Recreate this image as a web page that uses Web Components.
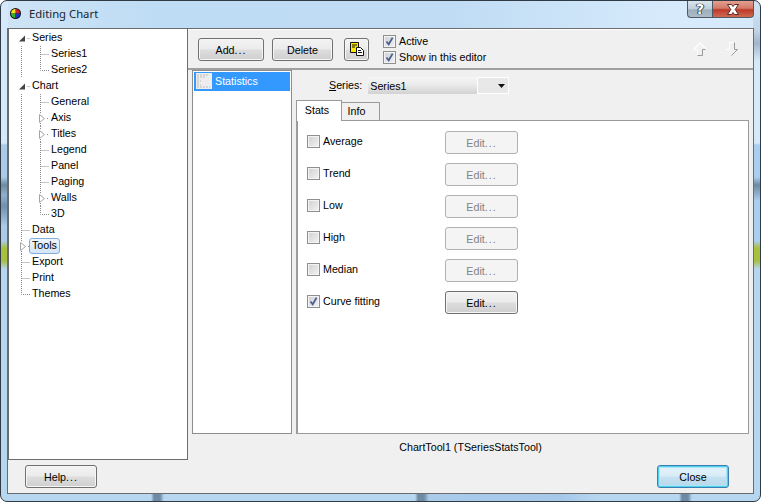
<!DOCTYPE html>
<html><head><meta charset="utf-8"><title>Editing Chart</title>
<style>
html,body{margin:0;padding:0;width:761px;height:502px;overflow:hidden;background:#fff}
body{font:10.7px "Liberation Sans",Arial,sans-serif;color:#000}
.d{letter-spacing:1px}
</style></head><body>
<x-window>
  <x-titlebar slot="title" text="Editing Chart"></x-titlebar>
  <x-tree slot="tree">
    <x-node g="o" text="Series"></x-node>
    <x-node g="|T" text="Series1"></x-node>
    <x-node g="|L" text="Series2"></x-node>
    <x-node g="o" text="Chart"></x-node>
    <x-node g="|T" text="General"></x-node>
    <x-node g="|c" text="Axis"></x-node>
    <x-node g="|c" text="Titles"></x-node>
    <x-node g="|T" text="Legend"></x-node>
    <x-node g="|T" text="Panel"></x-node>
    <x-node g="|T" text="Paging"></x-node>
    <x-node g="|c" text="Walls"></x-node>
    <x-node g="|L" text="3D"></x-node>
    <x-node g="T" text="Data"></x-node>
    <x-node g="c" text="Tools" selected></x-node>
    <x-node g="T" text="Export"></x-node>
    <x-node g="T" text="Print"></x-node>
    <x-node g="L" text="Themes"></x-node>
  </x-tree>
  <x-toolbar slot="toolbar"></x-toolbar>
  <x-list slot="list" text="Statistics"></x-list>
  <x-stats slot="page"></x-stats>
  <span slot="status">ChartTool1 (TSeriesStatsTool)</span>
  <x-btn slot="help" w="72" h="23">Help<span class="d">...</span></x-btn>
  <x-btn slot="close" w="72" h="23" kind="default">Close</x-btn>
</x-window>
<script>
const def=(name,html,extra={})=>{
  const t=document.createElement('template');t.innerHTML=html;
  class C extends HTMLElement{
    constructor(){super();this.attachShadow({mode:'open'}).appendChild(t.content.cloneNode(true));}
    connectedCallback(){extra.init&&extra.init.call(this);}
  }
  customElements.define(name,C);
};
def('x-btn',`<style>
:host{display:inline-flex;box-sizing:border-box;align-items:center;justify-content:center;border:1px solid #707070;border-radius:3px;
background:linear-gradient(#f3f3f3 0,#ebebeb 48%,#dddddd 52%,#cfcfcf 100%);box-shadow:inset 0 0 0 1px #f6f6f6;color:#000;padding-top:1px;white-space:nowrap}
:host([kind=disabled]){border-color:#adb2b5;background:#f4f4f4;color:#838383;box-shadow:none}
:host([kind=default]){border-color:#3c7fb1;background:linear-gradient(#e4f3fb 0,#d8ecf7 48%,#c6e2f2 52%,#b6d6e8 100%);box-shadow:inset 0 0 0 1px #4fd0f0,inset 0 0 0 2px #a8e6f8}
</style><slot></slot>`,{init(){const w=this.getAttribute('w'),h=this.getAttribute('h');if(w)this.style.width=w+'px';if(h)this.style.height=h+'px';}});

def('x-check',`<style>
:host{display:inline-flex;align-items:center;gap:3px;white-space:nowrap}
.b{width:13px;height:13px;box-sizing:border-box;border:1px solid #8e8f8f;background:linear-gradient(135deg,#d0d0d0,#f2f2f2);box-shadow:inset 0 0 0 1px #f4f4f4;display:block;flex:none}
svg{display:block;visibility:hidden}
:host([checked]) svg{visibility:visible}
</style><span class="b"><svg width="11" height="11" viewBox="0 0 11 11"><path d="M2.5 5.5 L4.7 8.3 L8.6 1.6" fill="none" stroke="#4a5f97" stroke-width="1.8"/></svg></span><slot></slot>`);

def('x-titlebar',`<style>
:host{display:flex;align-items:center;height:27px;box-sizing:border-box;padding:0 0 1px 3px;gap:8px;color:#1a2430;position:relative;font:11.3px "Noto Sans",sans-serif}
svg.i{display:block;flex:none}
.caps{position:absolute;top:0;right:0;display:flex;height:17px}
.h,.x{box-sizing:border-box;border:1px solid #4d5a66;border-top:0;display:flex;align-items:center;justify-content:center;height:17px}
.h{width:25px;border-right:0;border-radius:0 0 0 4px;background:linear-gradient(#dbe5ee 0,#c0ced9 50%,#9cadbb 55%,#aebcc8 100%);color:#fff;font:bold 14px "DejaVu Sans",sans-serif;text-shadow:0 0 1px #222,0 0 1px #222,1px 0 0 #555,-1px 0 0 #555}
.x{width:42px;border-radius:0 0 4px 0;background:linear-gradient(#e3a08f 0,#d27a69 45%,#bc3a2a 55%,#cf6a52 100%)}
</style>
<svg class="i" width="11" height="11" viewBox="0 0 11 11"><circle cx="5.5" cy="5.5" r="5.5" fill="#111"/><path d="M5.5 1A4.5 4.5 0 0 1 10 5.5L5.5 5.5Z" fill="#d8202a"/><path d="M1 5.5A4.5 4.5 0 0 1 5.5 1L5.5 5.5Z" fill="#f2e21c"/><path d="M1 5.5A4.5 4.5 0 0 0 5.5 10L5.5 5.5Z" fill="#2db52d"/><path d="M10 5.5A4.5 4.5 0 0 1 5.5 10L5.5 5.5Z" fill="#2030c8"/></svg>
<span id="t"></span>
<div class="caps"><div class="h">?</div><div class="x"><svg width="16" height="11" viewBox="0 0 16 11"><path d="M2.5 .5H6.5L8 2.5L9.5 .5H13.5L10.2 5.5L13.5 10.5H9.5L8 8.5L6.5 10.5H2.5L5.8 5.5Z" fill="#fff" stroke="#5c2a22" stroke-width="1"/></svg></div></div>`,
{init(){this.shadowRoot.getElementById('t').textContent=this.getAttribute('text');}});

def('x-tree',`<style>
:host{display:block;box-sizing:border-box;width:180px;height:100%;background:#fff;border:1px solid #6c6c6c;padding:1px 0 0 0}
</style><slot></slot>`);

def('x-node',`<style>
:host{display:flex;height:16px;align-items:center;white-space:nowrap}
svg{display:block;flex:none}
.t{padding:0 2px;margin-left:-1px;height:16px;box-sizing:border-box;line-height:13px;border:1px solid transparent}
:host([selected]) .t{border:1px solid #84acdd;border-radius:3px;background:linear-gradient(#eef5fc,#d3e5f8);}
</style><svg id="s" height="16"></svg><span class="t" id="t"></span>`,{init(){
  const g=this.getAttribute('g');const col=19,base=12;let x=base,p='';
  const dot='stroke="#8a8a8a" stroke-width="1" stroke-dasharray="1 1" fill="none"';
  for(let i=0;i<g.length;i++){
    const c=g[i],vx=x+.5;
    if(c=='|')p+=`<path d="M${vx} 0V16" ${dot}/>`;
    if(c=='T')p+=`<path d="M${vx} 0V16M${vx} 8.5H${x+9}" ${dot}/>`;
    if(c=='L')p+=`<path d="M${vx} 0V8.5H${x+9}" ${dot}/>`;
    if(c=='o')p+=`<path d="M${vx+6} 8.5H${x+9}" ${dot}/><path d="M${x-2} 11.5L${x+4} 11.5L${x+4} 5.5Z" fill="#444"/>`;
    if(c=='c')p+=`<path d="M${vx} 0V4M${vx} 13V16M${x+7} 8.5H${x+9}" ${dot}/><path d="M${x-.5} 4.5L${x+4.5} 8.5L${x-.5} 12.5Z" fill="#fff" stroke="#a6a6a6"/>`;
    x+=col;
  }
  const w=x-col+9;const s=this.shadowRoot.getElementById('s');
  s.setAttribute('width',w);s.setAttribute('viewBox',`0 0 ${w} 16`);s.innerHTML=p;
  this.shadowRoot.getElementById('t').textContent=this.getAttribute('text');
}});

def('x-toolbar',`<style>
:host{display:flex;align-items:flex-start;box-sizing:border-box;height:42px;background:#f0f0f0;border-top:1px solid #6c6c6c;box-shadow:inset 0 1px #fff;border-bottom:2px solid #a0a0a0;padding:9px 14px 0 10px;gap:8px}
.icon{margin-left:3px;padding-top:0}
.checks{display:flex;flex-direction:column;gap:3px;margin:-3px 0 0 6px}
.sp{flex:1}
.arrows{display:flex;gap:18px;margin-top:4px}
svg{display:block}
x-check{height:13px}
.d{letter-spacing:1px}
</style>
<x-btn w="66" h="23">Add<span class="d">...</span></x-btn><x-btn w="61" h="23">Delete</x-btn>
<x-btn class="icon" w="25" h="23"><svg width="16" height="16" viewBox="0 0 16 16"><path d="M1.5 1.5H9.5V11.5H1.5Z" fill="#ffe800" stroke="#111"/><path d="M3 4H8M3 6H6" stroke="#111"/><path d="M7.5 6.5H11.5L14.5 9.5V14.5H7.5Z" fill="#fff" stroke="#111"/><path d="M9 9.5H12M9 11.5H13" stroke="#111"/></svg></x-btn>
<div class="checks"><x-check checked>Active</x-check><x-check checked>Show in this editor</x-check></div>
<div class="sp"></div>
<div class="arrows">
<svg width="14" height="14" viewBox="0 0 14 14"><path d="M1 7L7 1L12.5 6.5" stroke="#fff" fill="none" stroke-width="1.2"/><path d="M1 7.5H4.5V13.5" fill="none" stroke="#fff"/><path d="M4.5 13.5H9.5V7.5H12.5" fill="none" stroke="#9a9a9a"/></svg>
<svg width="14" height="14" viewBox="0 0 14 14"><path d="M1 7.5H4.5V.5H9" fill="none" stroke="#fff"/><path d="M9.5 .5V7.5H12.5L6.5 13.5" fill="none" stroke="#9a9a9a"/></svg>
</div>`);

def('x-list',`<style>
:host{display:block;box-sizing:border-box;width:100px;height:100%;background:#fff;border:1px solid #8d8d8d;padding:1px}
.r{display:flex;align-items:center;height:19px;background:#3399ff;color:#fff;gap:3px;padding-left:2px}
svg{display:block}
</style><div class="r"><svg width="16" height="16" viewBox="0 0 16 16"><rect width="16" height="16" fill="#ededed"/><path d="M1 2H13M1 4H10M1 6H4M1 8H5M1 10H4M1 12H5M1 14H14" stroke="#bdbdbd" stroke-dasharray="2 1"/></svg><span id="t"></span></div>`,
{init(){this.shadowRoot.getElementById('t').textContent=this.getAttribute('text');}});

def('x-combo',`<style>
:host{display:inline-flex;height:17px;width:141px;box-sizing:border-box;background:linear-gradient(#f5f5f5 0,#ececec 40%,#d2d2d2 100%);align-items:center}
.v{flex:1;padding-left:2px;padding-top:2px}
.b{width:32px;height:17px;box-sizing:border-box;border:1px solid #fff;background:#e8e8e8;display:flex;align-items:center;justify-content:flex-end;padding:2px 2px 0 0}
svg{display:block}
</style><span class="v"><slot></slot></span><span class="b"><svg width="9" height="5" viewBox="0 0 9 5"><path d="M1 0H8L4.5 4Z" fill="#111"/></svg></span>`);

def('x-tabs',`<style>
:host{display:flex;flex-direction:column;flex:1;min-height:0}
.head{display:flex;align-items:flex-end;height:20px;position:relative;z-index:1}
.tab{box-sizing:border-box;display:flex;align-items:center;justify-content:center}
.a{width:46px;background:#fff;border:1px solid #9b9b9b;border-bottom:0;padding:0 4px 2px 0;margin-bottom:-1px;height:21px}
.i{width:38px;height:18px;background:#f0f0f0;border:1px solid #9b9b9b;border-left:0;border-bottom:0;padding-right:8px}
.body{flex:1;background:#fff;border:1px solid #9b9b9b;border-left-width:2px;min-height:0;box-sizing:border-box;padding:10px 0 0 9px}
</style><div class="head"><div class="tab a">Stats</div><div class="tab i">Info</div></div><div class="body"><slot></slot></div>`);

def('x-stat',`<style>
:host{display:grid;grid-template-columns:138px 73px;height:22px;margin-bottom:10px;align-items:start}
x-check{margin-top:4px;height:13px}
.d{letter-spacing:1px}
</style><x-check id="c"></x-check><x-btn id="b" w="73" h="23">Edit<span class="d">...</span></x-btn>`,{init(){
  const c=this.shadowRoot.getElementById('c'),b=this.shadowRoot.getElementById('b');
  c.textContent=this.getAttribute('text');
  if(this.hasAttribute('on'))c.setAttribute('checked','');else b.setAttribute('kind','disabled');
}});

def('x-stats',`<style>
:host{display:flex;flex-direction:column;flex:1;min-width:0;height:100%}
.series{display:flex;align-items:center;height:30px;padding-left:33px;gap:6px;flex:none;box-sizing:border-box;padding-top:1px}
u{text-decoration:underline}
</style>
<div class="series"><span><u>S</u>eries:</span><x-combo>Series1</x-combo></div>
<x-tabs>
<x-stat text="Average"></x-stat><x-stat text="Trend"></x-stat><x-stat text="Low"></x-stat><x-stat text="High"></x-stat><x-stat text="Median"></x-stat><x-stat text="Curve fitting" on></x-stat>
</x-tabs>`);

def('x-window',`<style>
:host{display:flex;flex-direction:column;width:761px;height:502px;box-sizing:border-box;border:1px solid #2f3a44;border-radius:7px;padding:0 6px 7px 6px;overflow:hidden;
background:
linear-gradient(90deg,#b7d7f0 0,#b7d7f0 150px,#6f8ba3 153px,#6f8ba3 159px,#b7d7f0 163px,#b7d7f0 414px,#6f8ba3 417px,#6f8ba3 423px,#aacbea 428px,#a5c8ea 560px,#b7d7f0 600px,#b7d7f0 678px,#6f8ba3 681px,#6f8ba3 687px,#b7d7f0 691px) left bottom/100% 7px no-repeat,
linear-gradient(#d6e9fa 0,#d6e9fa 142px,#a9cbe8 144px,#a9cbe8 176px,#6e8aa0 184px,#8fb0cc 194px,#6f90b0 205px,#a9cbe8 225px,#a9cbe8 240px,#a8c040 247px,#a8c040 260px,#b5d6f0 268px,#b7d7f0 100%) left top/7px 100% no-repeat,
linear-gradient(#d0e4f6 0,#c0d4e6 30px,#9fb6cb 42px,#d6e9fa 60px,#d6e9fa 142px,#a9cff0 144px,#a9cff0 176px,#6e8aa0 184px,#a9cff0 200px,#a9cff0 240px,#a8c040 247px,#a8c040 260px,#b5d6f0 268px,#b7d7f0 100%) right top/7px 100% no-repeat,
linear-gradient(90deg,#cfe4f6 0,#bedcf4 20%,#c0dcf4 60%,#d8ebfc 90%,#d6e9fa 100%)}
.client{height:467px;display:flex;flex-direction:column;background:#f0f0f0;border:1px solid #6c6c6c;border-top:0;box-sizing:border-box;width:747px}
.main{flex:1;display:flex;min-height:0}
.right{flex:1;display:flex;flex-direction:column;min-width:0}
.mid{flex:1;display:flex;min-height:0;padding:0 4px;gap:4px}
.status{height:26px;display:flex;align-items:center;justify-content:center;flex:none}
.foot{height:33px;flex:none;display:flex;justify-content:space-between;align-items:flex-start;padding:5px 24px 0 17px;box-sizing:border-box}
.treebox{width:180px;flex:none}
</style>
<slot name="title"></slot>
<div class="client"><div class="main"><div class="treebox"><slot name="tree"></slot></div>
<div class="right"><slot name="toolbar"></slot><div class="mid"><slot name="list"></slot><slot name="page"></slot></div><div class="status"><slot name="status"></slot></div></div></div>
<div class="foot"><slot name="help"></slot><slot name="close"></slot></div></div>`);
</script>
</body></html>
